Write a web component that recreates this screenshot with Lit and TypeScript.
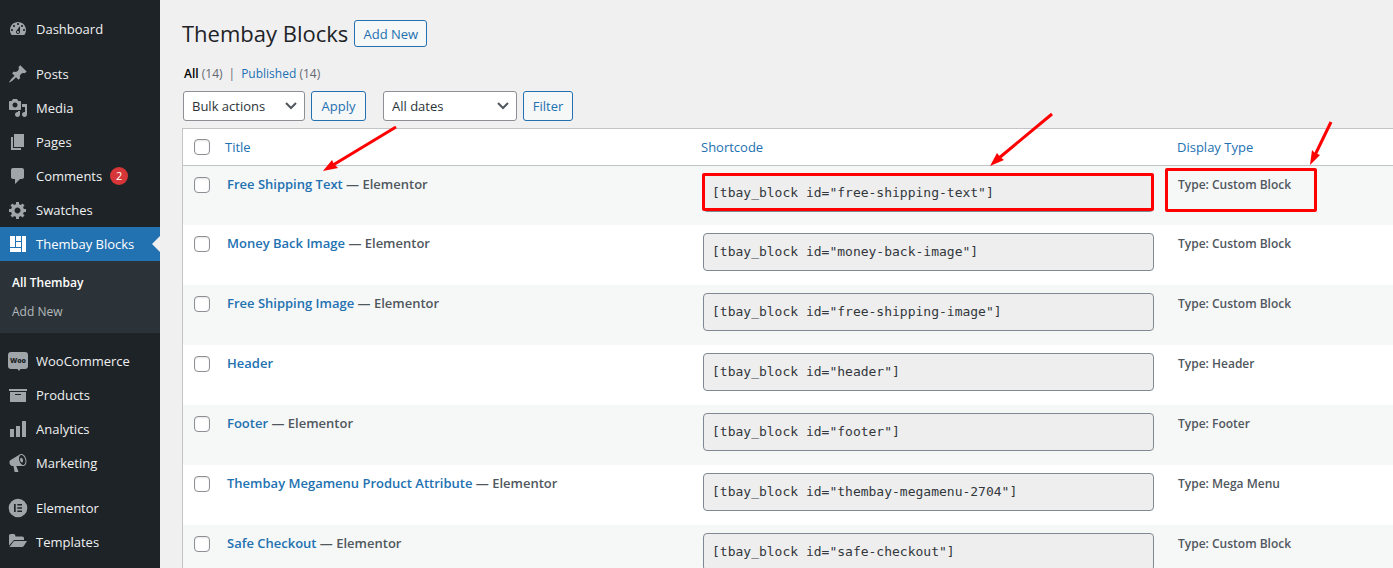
import { LitElement, html, svg, css, nothing } from "lit";
import type { SVGTemplateResult } from "lit";
import { customElement } from "lit/decorators.js";
import { classMap } from "lit/directives/class-map.js";

const path = (d: string) => svg`<path fill-rule="evenodd" d=${d}></path>`;

const icons: Record<string, SVGTemplateResult> = {
  dashboard: path("M3.76 16h12.48c1.1-1.37 1.76-3.11 1.76-5 0-4.42-3.58-8-8-8s-8 3.58-8 8c0 1.89.66 3.63 1.76 5zM10 4c.55 0 1 .45 1 1s-.45 1-1 1-1-.45-1-1 .45-1 1-1zM6 6c.55 0 1 .45 1 1s-.45 1-1 1-1-.45-1-1 .45-1 1-1zm8 0c.55 0 1 .45 1 1s-.45 1-1 1-1-.45-1-1 .45-1 1-1zm-5.37 5.55L12 7v6c0 1.1-.9 2-2 2s-2-.9-2-2c0-.57.24-1.08.63-1.45zM4 10c.55 0 1 .45 1 1s-.45 1-1 1-1-.45-1-1 .45-1 1-1zm12 0c.55 0 1 .45 1 1s-.45 1-1 1-1-.45-1-1 .45-1 1-1zm-5 3c0-.55-.45-1-1-1s-1 .45-1 1 .45 1 1 1 1-.45 1-1z"),
  posts: path("M10.44 3.02l1.82-1.82 6.36 6.35-1.83 1.82c-1.05-.68-2.48-.57-3.41.36l-.75.75c-.92.93-1.04 2.35-.35 3.41l-1.83 1.82-2.41-2.41-2.8 2.79c-.42.42-3.38 2.71-3.8 2.29s1.86-3.39 2.28-3.81l2.79-2.79L4.1 9.36l1.83-1.82c1.05.69 2.48.57 3.4-.36l.75-.75c.93-.92 1.05-2.35.36-3.41z"),
  media: path("M13 11V4c0-.55-.45-1-1-1h-1.67L9 1H5L3.67 3H2c-.55 0-1 .45-1 1v7c0 .55.45 1 1 1h10c.55 0 1-.45 1-1zM7 4.5c1.38 0 2.5 1.12 2.5 2.5S8.38 9.5 7 9.5 4.5 8.38 4.5 7 5.62 4.5 7 4.5zM14 6h5v10.5c0 1.38-1.12 2.5-2.5 2.5S14 17.88 14 16.5s1.12-2.5 2.5-2.5c.17 0 .34.02.5.05V9h-3V6zm-4 8.05V13h2v3.5c0 1.38-1.12 2.5-2.5 2.5S7 17.88 7 16.5 8.12 14 9.5 14c.17 0 .34.02.5.05z"),
  pages: path("M6 15V2h10v13H6zm-1 1h8v2H3V5h2v11z"),
  comments: path("M5 2h9c1.1 0 2 .9 2 2v7c0 1.1-.9 2-2 2h-2l-5 5v-5H5c-1.1 0-2-.9-2-2V4c0-1.1.9-2 2-2z"),
  gear: path("M18 12h-2.18c-.17.7-.44 1.35-.81 1.93l1.54 1.54-2.1 2.1-1.54-1.54c-.58.36-1.23.63-1.91.79V19H8v-2.18c-.68-.16-1.33-.43-1.91-.79l-1.54 1.54-2.12-2.12 1.54-1.54c-.36-.58-.63-1.23-.79-1.91H1V9.03h2.17c.16-.7.44-1.35.8-1.94L2.43 5.55l2.1-2.1 1.54 1.54c.58-.37 1.24-.64 1.93-.81V2h3v2.18c.68.16 1.33.43 1.91.79l1.54-1.54 2.12 2.12-1.54 1.54c.36.59.64 1.24.8 1.94H18V12zm-8.5 1.5c1.66 0 3-1.34 3-3s-1.34-3-3-3-3 1.34-3 3 1.34 3 3 3z"),
  layout: path("M2 2h5v11H2V2zm6 0h5v5H8V2zm6 0h4v16h-4V2zM8 8h5v5H8V8zm-6 6h11v4H2v-4z"),
  woo: svg`<path d="M3 1h14a3 3 0 0 1 3 3v11a3 3 0 0 1-3 3h-4.500l-1.500 2-1.500-2H3a3 3 0 0 1-3-3V4a3 3 0 0 1 3-3z"></path><text class="woo-text" x="10" y="12" text-anchor="middle">Woo</text>`,
  products: path("M19 4v2H1V4h18zM2 7h16v10H2V7zm11 3V9H7v1h6z"),
  analytics: path("M18 18V2h-4v16h4zm-6 0V7H8v11h4zm-6 0v-8H2v8h4z"),
  marketing: path("M18.150 5.940c.46 1.620.38 3.220-.02 4.480-.42 1.280-1.260 2.180-2.300 2.480-.16.06-.26.06-.4.06-.06.02-.12.02-.18.02-.06.02-.14.02-.22.02h-6.800l2.220 5.500c.02.14-.06.26-.14.34-.08.1-.24.16-.34.16H6.950c-.1 0-.26-.06-.34-.16-.08-.08-.16-.2-.14-.34l-1-5.500H4.250l-.02-.02c-.5.06-1.080-.18-1.540-.62s-.88-1.080-1.060-1.880c-.24-.8-.2-1.560-.02-2.200.18-.62.58-1.080 1.060-1.300l.02-.02 9-5.400c.1-.06.18-.1.24-.16.06-.04.14-.08.24-.12.16-.08.28-.12.5-.18 1.040-.3 2.240.1 3.220.98s1.840 2.240 2.260 3.860zm-2.580 5.980h-.02c.4-.1.74-.34 1.040-.7.58-.7.86-1.760.86-3.040 0-.64-.1-1.300-.28-1.980-.34-1.360-1.020-2.500-1.780-3.240s-1.680-1.100-2.460-.88c-.82.22-1.400.96-1.700 2-.32 1.040-.28 2.360.06 3.720.38 1.360 1 2.500 1.800 3.240.78.74 1.620 1.100 2.480.88zm-2.540-7.080c.22-.04.42-.02.62.04.38.16.76.48 1.020 1s.42 1.200.42 1.780c0 .3-.04.56-.12.8-.18.48-.44.84-.86.94-.34.1-.8-.06-1.140-.4s-.64-.86-.78-1.500c-.18-.62-.12-1.240.02-1.720s.48-.84.82-.94z"),
  elementor: path("M10 .7a9.300 9.300 0 1 0 0 18.600a9.300 9.300 0 1 0 0-18.600zM6 6h1.700v8H6zM9.300 6H14v1.600H9.300zM9.300 9.200H14v1.600H9.300zM9.300 12.400H14V14H9.300z"),
  templates: path("M1 13.500V3.800C1 2.800 1.800 2 2.800 2h2.700c.8 0 1.500.5 1.700 1.200L7.500 4.500h6.700c1 0 1.800.8 1.800 1.800V8H7.200c-1 0-1.900.5-2.400 1.300zM1.500 15l3.800-5.300c.4-.5.900-.7 1.500-.7H19l-3.200 5c-.4.600-1 1-1.800 1z"),
};

interface MenuItem {
  label: string;
  icon: string;
  badge?: number;
  submenu?: string[];
}

const menu: MenuItem[][] = [
  [{ label: "Dashboard", icon: "dashboard" }],
  [
    { label: "Posts", icon: "posts" },
    { label: "Media", icon: "media" },
    { label: "Pages", icon: "pages" },
    { label: "Comments", icon: "comments", badge: 2 },
    { label: "Swatches", icon: "gear" },
    { label: "Thembay Blocks", icon: "layout", submenu: ["All Thembay", "Add New"] },
  ],
  [
    { label: "WooCommerce", icon: "woo" },
    { label: "Products", icon: "products" },
    { label: "Analytics", icon: "analytics" },
    { label: "Marketing", icon: "marketing" },
  ],
  [
    { label: "Elementor", icon: "elementor" },
    { label: "Templates", icon: "templates" },
  ],
];

interface Block {
  title: string;
  slug: string;
  type: string;
  elementor: boolean;
}

const blocks: Block[] = [
  { title: "Free Shipping Text", slug: "free-shipping-text", type: "Custom Block", elementor: true },
  { title: "Money Back Image", slug: "money-back-image", type: "Custom Block", elementor: true },
  { title: "Free Shipping Image", slug: "free-shipping-image", type: "Custom Block", elementor: true },
  { title: "Header", slug: "header", type: "Header", elementor: false },
  { title: "Footer", slug: "footer", type: "Footer", elementor: true },
  { title: "Thembay Megamenu Product Attribute", slug: "thembay-megamenu-2704", type: "Mega Menu", elementor: true },
  { title: "Safe Checkout", slug: "safe-checkout", type: "Custom Block", elementor: true },
];

@customElement("admin-menu")
export class AdminMenu extends LitElement {
  static styles = css`
    :host {
      display: block;
      background: #1d2327;
      font-size: 13px;
      line-height: 18px;
    }
    nav {
      display: flex;
      flex-direction: column;
      gap: 11px;
      padding-top: 12px;
    }
    ul {
      list-style: none;
      margin: 0;
      padding: 0;
    }
    a {
      color: #f0f0f1;
      text-decoration: none;
    }
    .item {
      display: flex;
      align-items: center;
      gap: 8px;
      height: 34px;
      padding-left: 8px;
      white-space: nowrap;
    }
    .icon {
      width: 20px;
      height: 20px;
      fill: #a0a5aa;
      flex: none;
    }
    .woo-text {
      font: 900 7px "Open Sans", sans-serif;
      fill: #1d2327;
    }
    .current {
      position: relative;
      background: #2271b1;
      color: #fff;
    }
    .current .icon {
      fill: #fff;
    }
    .current::after {
      content: "";
      position: absolute;
      right: 0;
      top: 9px;
      border: 8px solid transparent;
      border-right-color: #f0f0f1;
      border-left: 0;
    }
    .badge {
      min-width: 18px;
      height: 18px;
      border-radius: 9px;
      background: #d63638;
      color: #fff;
      font-size: 11px;
      text-align: center;
    }
    .submenu {
      padding: 7px 0;
      background: #2c3338;
    }
    .submenu a {
      display: flex;
      align-items: center;
      height: 29px;
      padding-left: 12px;
      color: #b4b8bc;
      font-size: 12px;
    }
    .submenu .active {
      color: #fff;
      font-weight: 600;
    }
  `;

  private renderItem(item: MenuItem) {
    return html`<li>
      <a class=${classMap({ item: true, current: !!item.submenu })} href="#">
        <svg class="icon" viewBox="0 0 20 20" aria-hidden="true">${icons[item.icon]}</svg>
        <span>${item.label}</span>
        ${item.badge ? html`<span class="badge">${item.badge}</span>` : nothing}
      </a>
      ${item.submenu
        ? html`<ul class="submenu">
            ${item.submenu.map((s, i) => html`<li><a class=${classMap({ active: i === 0 })} href="#">${s}</a></li>`)}
          </ul>`
        : nothing}
    </li>`;
  }

  render() {
    return html`<nav aria-label="Main menu">
      ${menu.map((group) => html`<ul>${group.map((item) => this.renderItem(item))}</ul>`)}
    </nav>`;
  }
}

@customElement("block-table")
export class BlockTable extends LitElement {
  static styles = css`
    :host {
      display: block;
    }
    table {
      width: 100%;
      table-layout: fixed;
      border-collapse: separate;
      border-spacing: 0;
      border: solid #c3c4c7;
      border-width: 1px 0 0 1px;
      background: #fff;
      color: #50575e;
      font-size: 13px;
      line-height: 20px;
    }
    .check-col {
      width: 34px;
    }
    .type-col {
      width: 224px;
    }
    th,
    td {
      box-sizing: border-box;
      padding: 0 8px;
      text-align: left;
      vertical-align: top;
      font-weight: 400;
      white-space: nowrap;
    }
    th {
      height: 36px;
      vertical-align: middle;
    }
    td {
      position: relative;
      height: 60px;
      padding: 8px 10px;
      font-weight: 600;
    }
    tbody tr:first-child td {
      border-top: 1px solid #c3c4c7;
    }
    tbody tr:nth-child(odd) {
      background: #f6f7f7;
    }
    th.check,
    td.check {
      padding-left: 11px;
      padding-right: 0;
    }
    td.code {
      padding-right: 15px;
    }
    td.type {
      padding-top: 9px;
      padding-left: 9px;
      font-size: 12px;
    }
    a {
      color: #2271b1;
      text-decoration: none;
    }
    .box {
      appearance: none;
      display: block;
      box-sizing: border-box;
      width: 16px;
      height: 16px;
      margin: 0;
      border: 1px solid #8c8f94;
      border-radius: 4px;
      background: #fff;
      box-shadow: inset 0 1px 2px rgba(0, 0, 0, 0.1);
    }
    .box:checked {
      background: #2271b1;
    }
    td .box {
      margin-top: 3px;
    }
    .shortcode {
      display: block;
      box-sizing: border-box;
      width: 100%;
      height: 38px;
      padding: 0 8px 2px;
      border: 1px solid #7e8993;
      border-radius: 4px;
      background: #eee;
      color: #32373c;
      font: 13px "DejaVu Sans Mono", monospace;
    }
    .frame {
      position: absolute;
      box-sizing: border-box;
      border: 3px solid #f00;
      border-radius: 2px;
      pointer-events: none;
    }
    .code-frame {
      inset: 7px 15px auto 9px;
      height: 38px;
    }
    .type-frame {
      top: 2px;
      left: -4px;
      width: 152px;
      height: 44px;
    }
    .arrow {
      position: absolute;
      overflow: visible;
      fill: #f00;
      stroke: none;
      pointer-events: none;
    }
    .arrow line {
      stroke: #f00;
      stroke-width: 3px;
    }
    .title-arrow {
      left: 106px;
      top: -40px;
    }
    .code-arrow {
      right: 116px;
      top: -53px;
    }
    .type-arrow {
      left: 141px;
      top: -45px;
    }
  `;

  private renderRow(block: Block, index: number) {
    const marked = index === 0;
    return html`<tr>
      <td class="check"><input class="box" type="checkbox" aria-label=${`Select ${block.title}`} /></td>
      <td>
        <a href="#">${block.title}</a>${block.elementor ? " — Elementor" : nothing}
        ${marked
          ? html`<svg class="arrow title-arrow" width="74" height="45" aria-hidden="true">
              <line x1="73" y1="1" x2="10" y2="39"></line>
              <path d="M0 45L9 34L11 38L15 42z"></path>
            </svg>`
          : nothing}
      </td>
      <td class="code">
        <input class="shortcode" type="text" readonly aria-label=${`Shortcode for ${block.title}`} .value=${`[tbay_block id="${block.slug}"]`} />
        ${marked
          ? html`<span class="frame code-frame"></span>
              <svg class="arrow code-arrow" width="63" height="53" aria-hidden="true">
                <line x1="62" y1="1" x2="9" y2="45"></line>
                <path d="M0 53L7 40L10 44L14 47z"></path>
              </svg>`
          : nothing}
      </td>
      <td class="type">
        Type: ${block.type}
        ${marked
          ? html`<span class="frame type-frame"></span>
              <svg class="arrow type-arrow" width="22" height="44" aria-hidden="true">
                <line x1="21" y1="1" x2="5" y2="34"></line>
                <path d="M0 44L2 29L5 32L10 34z"></path>
              </svg>`
          : nothing}
      </td>
    </tr>`;
  }

  render() {
    return html`<table>
      <colgroup>
        <col class="check-col" />
        <col />
        <col />
        <col class="type-col" />
      </colgroup>
      <thead>
        <tr>
          <th class="check"><input class="box" type="checkbox" aria-label="Select all" /></th>
          <th><a href="#">Title</a></th>
          <th><a href="#">Shortcode</a></th>
          <th><a href="#">Display Type</a></th>
        </tr>
      </thead>
      <tbody>
        ${blocks.map((block, i) => this.renderRow(block, i))}
      </tbody>
    </table>`;
  }
}

@customElement("app-root")
export class AppRoot extends LitElement {
  static styles = css`
    :host {
      display: grid;
      grid-template-columns: 160px minmax(0, 1fr);
      height: 100vh;
      overflow: hidden;
      background: #f0f0f1;
      color: #3c434a;
      font-family: "Open Sans", "Noto Sans", sans-serif;
      font-size: 13px;
      line-height: 20px;
    }
    main {
      padding: 20px 0 0 22px;
    }
    header {
      display: flex;
      align-items: center;
      gap: 6px;
    }
    h1 {
      margin: 0;
      color: #1d2327;
      font-size: 22px;
      font-weight: 400;
      line-height: 27px;
    }
    a {
      color: #2271b1;
      text-decoration: none;
    }
    button,
    .add {
      box-sizing: border-box;
      border: 1px solid #2271b1;
      border-radius: 3px;
      background: #f6f7f7;
      color: #2271b1;
      font: inherit;
      text-align: center;
    }
    .add {
      width: 73px;
      height: 27px;
      line-height: 26px;
      font-weight: 500;
    }
    .views {
      display: flex;
      gap: 6px;
      margin: 17px 0 7px;
      padding-left: 2px;
      color: #646970;
      font-size: 12px;
    }
    .views strong {
      color: #000;
      font-weight: 600;
    }
    .filters {
      display: flex;
      gap: 6px;
      margin-bottom: 7px;
      padding-left: 1px;
    }
    .filters button {
      height: 30px;
      padding: 0;
    }
    .apply {
      width: 55px;
      margin-right: 11px;
    }
    .filter {
      width: 50px;
    }
    .select {
      display: grid;
    }
    .select > * {
      grid-area: 1 / 1;
    }
    select {
      appearance: none;
      box-sizing: border-box;
      height: 30px;
      padding: 0 24px 0 8px;
      border: 1px solid #8c8f94;
      border-radius: 3px;
      background: #fff;
      color: #2c3338;
      font: inherit;
    }
    .bulk {
      width: 122px;
    }
    .dates {
      width: 134px;
    }
    .chevron {
      place-self: center end;
      margin-right: 8px;
      fill: none;
      stroke: #50575e;
      stroke-width: 2px;
      pointer-events: none;
    }
  `;

  private renderSelect(name: string, label: string, option: string) {
    return html`<div class="select">
      <select class=${name} aria-label=${label}>
        <option>${option}</option>
      </select>
      <svg class="chevron" width="12" height="8" viewBox="0 0 12 8" aria-hidden="true"><path d="M1 1l5 5 5-5"></path></svg>
    </div>`;
  }

  render() {
    return html`
      <admin-menu></admin-menu>
      <main>
        <header>
          <h1>Thembay Blocks</h1>
          <a class="add" href="#">Add New</a>
        </header>
        <div class="views">
          <span><strong>All</strong> (14)</span>
          <span>|</span>
          <span><a href="#">Published</a> (14)</span>
        </div>
        <div class="filters">
          ${this.renderSelect("bulk", "Bulk action", "Bulk actions")}
          <button class="apply" type="button">Apply</button>
          ${this.renderSelect("dates", "Filter by date", "All dates")}
          <button class="filter" type="button">Filter</button>
        </div>
        <block-table></block-table>
      </main>
    `;
  }
}
